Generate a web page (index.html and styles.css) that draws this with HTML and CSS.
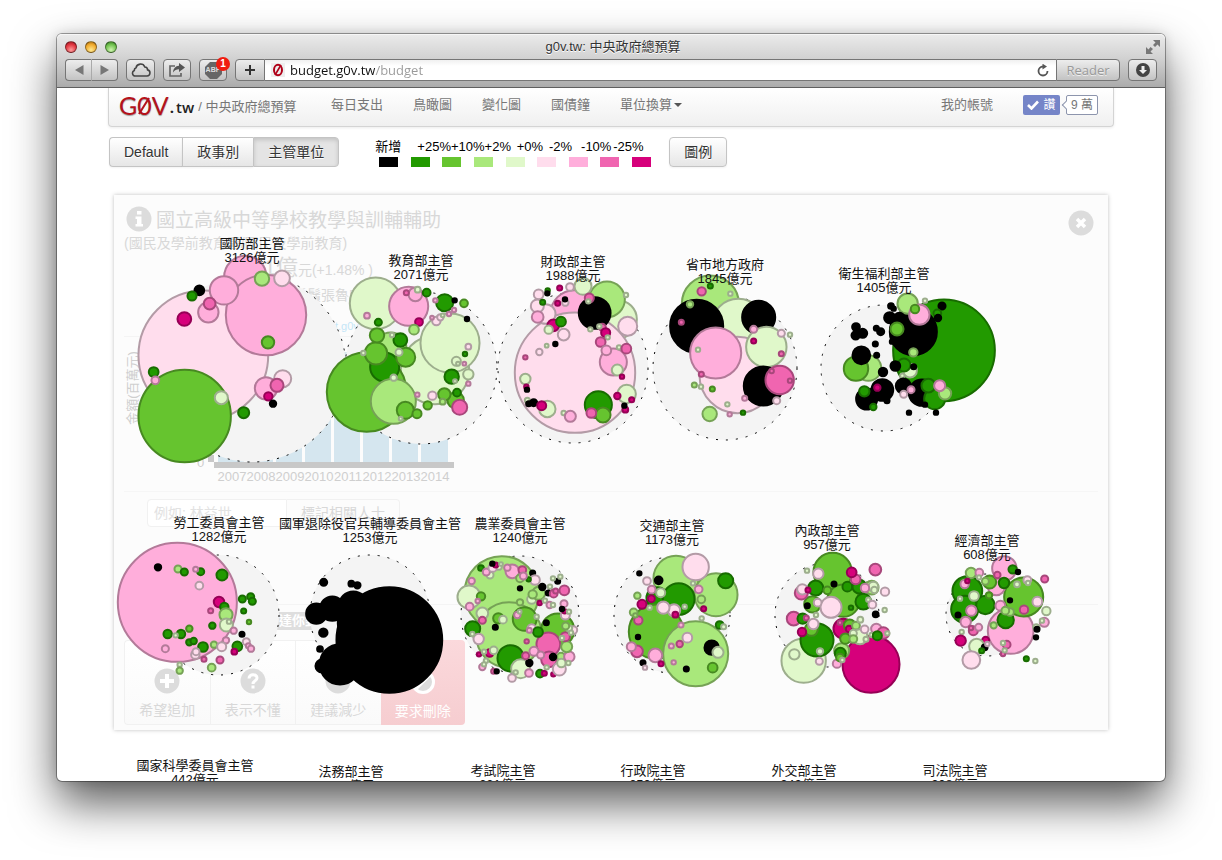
FILE: index.html
```html
<!DOCTYPE html>
<html lang="zh-Hant">
<head>
<meta charset="utf-8">
<title>g0v.tw: 中央政府總預算</title>
<link rel="stylesheet" href="styles.css">
</head>
<body>
<div class="window">
  <header class="chrome">
    <div class="titlebar">
      <div class="lights"><i class="light red"></i><i class="light yellow"></i><i class="light green"></i></div>
      <div class="window-title">g0v.tw: 中央政府總預算</div>
      <svg class="fullscreen" width="16" height="16" viewBox="0 0 16 16" fill="#777"><path d="M8 1h7v7l-2.500-2.500-2.500 2.500-2-2 2.500-2.500z"/><path d="M1 8l2.500 2.500 2-2.500 2.500 2-2.500 2.500 2.500 2.500H1z"/></svg>
    </div>
    <div class="toolbar">
      <div class="nav-pair">
        <button class="tool" aria-label="Back"><svg width="10" height="10" viewBox="0 0 10 10"><path d="M9.500 0v10L1 5z" fill="#777"/></svg></button>
        <button class="tool" aria-label="Forward"><svg width="10" height="10" viewBox="0 0 10 10"><path d="M.5 0v10L9 5z" fill="#777"/></svg></button>
      </div>
      <button class="tool solo" aria-label="iCloud tabs"><svg width="20" height="14" viewBox="0 0 20 14" fill="none" stroke="#444" stroke-width="1.600"><path d="M4.500 13h11.500a3.100 3.100 0 0 0 .6-6.100A3 3 0 0 0 13.800 4 4.600 4.600 0 0 0 5 4.800a2.700 2.700 0 0 0-1.700 2.800A2.800 2.800 0 0 0 4.500 13z"/></svg></button>
      <button class="tool solo narrow" aria-label="Share"><svg width="18" height="14" viewBox="0 0 18 14"><path d="M7 3H2v10h11v-3" fill="none" stroke="#666" stroke-width="1.700"/><path d="M11 0l6 4.500-6 4.500V6.300C8.500 6.300 6.500 7 5 9.500 5.300 5.500 7.500 3 11 2.800z" fill="#555"/></svg></button>
      <button class="tool solo narrow abp" aria-label="Adblock Plus"><svg width="17" height="17" viewBox="0 0 17 17"><path d="M5 0h7l5 5v7l-5 5H5l-5-5V5z" fill="#666"/></svg><span class="abp-text">ABP</span><span class="abp-count">1</span></button>
      <div class="address">
        <button class="tool add" aria-label="Add bookmark"><svg width="12" height="12" viewBox="0 0 12 12"><path d="M6 1v10M1 6h10" stroke="#333" stroke-width="2"/></svg></button>
        <label class="url"><svg width="14" height="14" viewBox="0 0 14 14"><rect width="14" height="14" fill="#eee"/><ellipse cx="7" cy="7" rx="4" ry="5.200" fill="none" stroke="#b00018" stroke-width="2"/><path d="M4 12L10 2" stroke="#b00018" stroke-width="1.600"/></svg>
          <input type="text" value="budget.g0v.tw/budget" aria-label="Address" class="url-input">
          <svg width="12" height="13" viewBox="0 0 12 13"><path d="M10.500 7a4.500 4.500 0 1 1-4.500-4.500" fill="none" stroke="#555" stroke-width="1.800"/><path d="M5.500-.3l4.500 2.800-4.500 3z" fill="#555"/></svg>
        </label>
        <button class="tool reader">Reader</button>
      </div>
      <button class="tool solo" aria-label="Downloads"><svg width="14" height="14" viewBox="0 0 14 14"><circle cx="7" cy="7" r="7" fill="#444"/><path d="M5.500 3h3v4H11l-4 4-4-4h2.500z" fill="#eee"/></svg></button>
    </div>
  </header>

  <main class="page">
    <nav class="navbar">
      <a class="brand" href="#"><span class="logo">G<span class="zero">0<svg width="14" height="20" viewBox="0 0 14 20"><path d="M2 18L12 2" stroke="#b5121b" stroke-width="2"/></svg></span>V</span><span class="logo-tw">.<b>tw</b></span><span class="site">/ 中央政府總預算</span></a>
      <div class="links">
        <a href="#">每日支出</a><a href="#">鳥瞰圖</a><a href="#">變化圖</a><a href="#">國債鐘</a><a href="#">單位換算<i class="caret"></i></a>
      </div>
      <a class="account" href="#">我的帳號</a>
      <button class="like"><svg width="12" height="10" viewBox="0 0 12 10"><path d="M1 5l3.500 3.500L11 1.500" fill="none" stroke="#fff" stroke-width="2.600"/></svg>讚</button>
      <span class="like-count">9 萬</span>
    </nav>

    <section class="controls">
      <div class="btn-group"><button>Default</button><button>政事別</button><button class="active">主管單位</button></div>
      <div class="legend">
        <div class="legend-labels"><span>新增</span><span>+25%</span><span>+10%</span><span>+2%</span><span>+0%</span><span>-2%</span><span>-10%</span><span>-25%</span></div>
        <div class="swatches"><i class="c-k"></i><i class="c-g"></i><i class="c-G"></i><i class="c-l"></i><i class="c-w"></i><i class="c-p"></i><i class="c-P"></i><i class="c-m"></i><i class="c-M"></i></div>
      </div>
      <div class="btn-group"><button>圖例</button></div>
    </section>

    <section class="panel">
      <div class="panel-head">
        <svg width="26" height="26" viewBox="0 0 26 26"><circle cx="13" cy="13" r="12.500" fill="#dcdcdc"/><path d="M11 5h4.500v3.500H11zM9.500 10.500h6V18H17v2.500H9.500V18H11v-5H9.500z" fill="#fff"/></svg>
        <h1>國立高級中等學校教學與訓輔輔助</h1>
        <button class="close" aria-label="Close"><svg width="26" height="26" viewBox="0 0 26 26"><circle cx="13" cy="13" r="12.500" fill="#dcdcdc"/><path d="M9 9l8 8M17 9l-8 8" stroke="#fff" stroke-width="3.500"/></svg></button>
      </div>
      <p class="subtitle">(國民及學前教育署/國民及學前教育)</p>
      <p class="amount"><big>1億</big>元(+1.48% )</p>
      <p class="compare">碗鬍鬚張魯肉飯</p>
      <p class="source"><a href="#">budget.g0v.tw</a></p>
      <svg class="chart" width="340" height="155">
        <g class="bars"><rect x="94" y="15" width="26" height="110"/><rect x="123" y="15" width="26" height="110"/><rect x="152" y="15" width="26" height="110"/><rect x="181" y="15" width="26" height="110"/><rect x="210" y="15" width="26" height="110"/><rect x="239" y="15" width="26" height="110"/><rect x="268" y="15" width="26" height="110"/><rect x="297" y="15" width="27" height="110"/></g>
        <path d="M84 118h6v7h240v6H90v-6h-6z" fill="#c8c8c8"/>
        <text transform="translate(13 51) rotate(-90)" text-anchor="middle">金額(百萬元)</text>
        <text x="73" y="130">0</text>
        <g text-anchor="middle"><text x="108" y="144">2007</text><text x="137" y="144">2008</text><text x="166" y="144">2009</text><text x="195" y="144">2010</text><text x="224" y="144">2011</text><text x="253" y="144">2012</text><text x="282" y="144">2013</text><text x="311" y="144">2014</text></g>
      </svg>
      <form class="tag-form"><input type="text" placeholder="例如: 林益世" aria-label="相關人士"><button type="button">標記相關人士</button></form>
      <div class="prompt"><span>表達你對這筆預算的看法</span></div>
      <div class="votes">
        <button><svg width="26" height="26" viewBox="0 0 26 26"><circle cx="13" cy="13" r="12.500" fill="#dcdcdc"/><path d="M13 6v14M6 13h14" stroke="#fff" stroke-width="4"/></svg>希望追加</button>
        <button><svg width="26" height="26" viewBox="0 0 26 26"><circle cx="13" cy="13" r="12.500" fill="#dcdcdc"/><path d="M9 10.500c0-5 8-5 8-.5 0 3-4 2.500-4 6" fill="none" stroke="#fff" stroke-width="3"/><rect x="11.500" y="17.500" width="3" height="3" fill="#fff"/></svg>表示不懂</button>
        <button><svg width="26" height="26" viewBox="0 0 26 26"><circle cx="13" cy="13" r="12.500" fill="#dcdcdc"/><path d="M6 13h14" stroke="#fff" stroke-width="4"/></svg>建議減少</button>
        <button class="danger"><svg width="26" height="26" viewBox="0 0 26 26"><circle cx="13" cy="13" r="10.500" fill="#dcdcdc" stroke="#fff" stroke-width="3"/><path d="M6 20L20 6" stroke="#fff" stroke-width="3"/></svg>要求刪除</button>
      </div>
    </section>

    <svg class="bubbles" id="bubbles"></svg>
  </main>
</div>
<script src="bubbles.js"></script>
</body>
</html>
```

FILE: styles.css
```css
* { box-sizing: border-box; }
body {
  margin: 0;
  min-height: 100vh;
  padding: 34px 57px 79px;
  background: #fff;
  color: #555;
  font: 14px/20px "Liberation Sans", "Noto Sans CJK TC", sans-serif;
  display: flex;
}
button, input { font: inherit; color: inherit; margin: 0; }
button { cursor: pointer; }
p, h1 { margin: 0; font-weight: normal; }
a { color: inherit; text-decoration: none; }

.window {
  flex: 1;
  min-width: 0;
  height: calc(100vh - 113px);
  display: flex;
  flex-direction: column;
  border-radius: 5px;
  background: #fff;
  box-shadow: 0 0 0 1px rgba(0,0,0,.35), 0 0 12px rgba(0,0,0,.15), 0 22px 46px rgba(0,0,0,.65);
}

/* browser chrome */
.chrome {
  border-radius: 5px 5px 0 0;
  border-bottom: 1px solid #5f5f5f;
  background: linear-gradient(#ebebeb, #d2d2d2 45%, #ababab);
  box-shadow: inset 0 1px #f6f6f6;
  padding: 0 8px 6px;
}
.titlebar { display: flex; align-items: center; height: 25px; }
.lights { display: flex; gap: 8px; width: 70px; }
.light { width: 12px; height: 12px; border-radius: 50%; border: 1px solid rgba(0,0,0,.4); }
.red { background: radial-gradient(circle at 50% 80%, #ff9c9c, #e0353f 60%, #8d1420); }
.yellow { background: radial-gradient(circle at 50% 80%, #ffe98f, #f0a92c 60%, #94600f); }
.green { background: radial-gradient(circle at 50% 80%, #cff5b0, #6fc04d 60%, #2d6c1e); }
.window-title { flex: 1; text-align: center; font-size: 13px; color: #333; text-shadow: 0 1px #fff; }
.fullscreen { margin-left: 54px; margin-right: -4px; }
.toolbar { display: flex; gap: 8px; height: 22px; }
.tool {
  display: flex;
  align-items: center;
  justify-content: center;
  padding: 0;
  border: 1px solid #757575;
  border-radius: 4px;
  background: linear-gradient(#ededed, #c3c3c3);
}
.nav-pair { display: flex; }
.nav-pair .tool { width: 27px; }
.nav-pair .tool:first-child { border-radius: 4px 0 0 4px; border-right-color: #aaa; }
.nav-pair .tool:last-child { border-radius: 0 4px 4px 0; border-left: 0; width: 26px; }
.solo { width: 29px; }
.narrow { width: 28px; }
.abp { position: relative; }
.abp-text { position: absolute; font-size: 7px; line-height: 8px; font-weight: bold; color: #ddd; }
.abp-count {
  position: absolute;
  top: -3px;
  right: -4px;
  width: 14px;
  height: 14px;
  border-radius: 50%;
  background: #f01c10;
  color: #fff;
  font-size: 10px;
  line-height: 14px;
  font-weight: bold;
}
.address { flex: 1; display: flex; min-width: 0; }
.add { width: 30px; border-radius: 4px 0 0 4px; }
.url {
  flex: 1;
  min-width: 0;
  display: flex;
  align-items: center;
  gap: 5px;
  padding: 0 7px 0 6px;
  background: linear-gradient(#f0f0f0, #fff 30%);
  border: solid #757575;
  border-width: 1px 0;
}
.url-input {
  flex: 1;
  min-width: 0;
  height: 20px;
  padding: 0;
  border: 0;
  outline: 0;
  font-family: "Open Sans", sans-serif;
  font-size: 13px;
  color: transparent;
  background: linear-gradient(90deg, #111 85px, #999 85px);
  -webkit-background-clip: text;
  background-clip: text;
}
.reader { width: 64px; border-radius: 0 4px 4px 0; color: #999; font-family: "Open Sans", sans-serif; font-size: 13px; text-shadow: 0 1px #eee; }

/* page */
.page { position: relative; flex: 1; min-height: 0; overflow: hidden; padding: 0 51px; border-radius: 0 0 5px 5px; }
.navbar {
  display: flex;
  align-items: center;
  height: 39px;
  padding: 0 15px 4px 10px;
  border: 1px solid #d4d4d4;
  border-top: 0;
  border-radius: 0 0 4px 4px;
  background: linear-gradient(#fff, #f0f0f0);
  box-shadow: 0 1px 3px rgba(0,0,0,.08);
  font-size: 13px;
  color: #777;
}
.brand { display: flex; align-items: center; width: 212px; white-space: nowrap; }
.logo { font-family: Lato, sans-serif; font-size: 25px; color: #b5121b; text-shadow: 0 1px 1px rgba(0,0,0,.35); }
.zero { position: relative; }
.zero svg { position: absolute; left: 0; top: 6px; }
.logo-tw { margin: 0 4px 0 1px; padding-top: 4px; color: #222; font: 15px/20px "Open Sans", sans-serif; font-weight: bold; }
.logo-tw b { font-weight: 600; margin-left: 2px; }
.site { padding-top: 4px; }
.links { display: flex; gap: 30px; flex: 1; }
.caret { display: inline-block; margin-left: 2px; vertical-align: 2px; border: 4px solid transparent; border-top-color: #555; border-bottom: 0; }
.account { margin-right: 30px; }
.like { display: flex; align-items: center; justify-content: center; gap: 4px; width: 37px; height: 20px; padding: 0; border: 0; border-radius: 2px; background: #7585c8; color: #fff; font-size: 12px; }
.like-count { position: relative; margin-left: 6px; width: 32px; height: 20px; border: 1px solid #8d95ad; border-radius: 2px; background: #fff; font-size: 12px; line-height: 18px; text-align: center; }
.like-count::before { content: ""; position: absolute; left: -4px; top: 6px; width: 5px; height: 5px; background: #fff; border: solid #8d95ad; border-width: 0 0 1px 1px; transform: rotate(45deg); }

.controls { display: flex; height: 30px; margin: 10px 1px 28px; }
.btn-group { display: flex; }
.btn-group button {
  height: 30px;
  padding: 0 14px;
  border: 1px solid #c4c4c4;
  border-right-width: 0;
  background: linear-gradient(#fff, #e6e6e6);
  color: #333;
  text-shadow: 0 1px #fff;
  box-shadow: 0 1px 2px rgba(0,0,0,.05);
}
.btn-group button:first-child { border-radius: 4px 0 0 4px; }
.btn-group button:last-child { border-right-width: 1px; border-radius: 0 4px 4px 0; }
.btn-group button:only-child { border-radius: 4px; }
.btn-group .active { background: #e4e4e4; box-shadow: inset 0 2px 4px rgba(0,0,0,.15); }
.legend { width: 284px; margin: 0 6px 0 40px; color: #000; font-size: 13px; }
.legend-labels { display: grid; grid-template-columns: 42px repeat(7, 1fr); width: 270px; margin-left: -4px; white-space: nowrap; }
.swatches { display: grid; grid-template-columns: repeat(9, 1fr); }
.swatches i { width: 19px; height: 10px; }
.c-k { background: #000; } .c-g { background: #229a00; } .c-G { background: #66c42f; }
.c-l { background: #a9e87b; } .c-w { background: #e0f8ca; } .c-p { background: #ffdded; }
.c-P { background: #ffaedb; } .c-m { background: #f065b0; } .c-M { background: #d6007b; }

/* faded detail panel behind the bubbles */
.panel { margin: 0 6px; padding: 10px 10px 5px; background: #fcfcfc; box-shadow: 0 0 4px rgba(0,0,0,.25); color: #d8d8d8; }
.panel-head { display: flex; align-items: flex-start; gap: 4px; height: 28px; padding: 1px 0 0 2px; }
.panel-head h1 { flex: 1; font-size: 19px; line-height: 30px; }
.close { width: 26px; height: 26px; margin: 4px 4px 0 0; padding: 0; border: 0; background: none; }
.close svg { display: block; }
.subtitle { line-height: 20px; }
.amount { width: 249px; text-align: right; line-height: 30px; }
.amount big { font-size: 22px; }
.compare { width: 253px; text-align: right; }
.source { width: 248px; margin: 11px 0 0; text-align: right; font-size: 11px; color: #c4e6f7; }
.chart { display: block; border-top: 1px solid #f4f4f4; fill: #cfcfcf; font-size: 13px; }
.bars { fill: #d5e6ef; }
.tag-form { display: flex; height: 43px; padding: 7px 0 7px 23px; border-top: 1px solid #f6f6f6; }
.tag-form input { width: 140px; height: 28px; padding: 0 6px; border: 1px solid #f1f1f1; border-radius: 4px 0 0 4px; background: #fff; }
.tag-form input::placeholder { color: #e2e2e2; }
.tag-form button { height: 28px; padding: 0 14px; border: 1px solid #f1f1f1; border-left: 0; border-radius: 0 4px 4px 0; background: #fcfcfc; }
.prompt { margin-top: 70px; padding: 7px 0 10px 130px; border-top: 1px solid #f4f4f4; font-size: 13px; line-height: 18px; font-weight: bold; }
.prompt span { display: inline-block; padding: 0 12px; background: #dedede; color: #fff; }
.votes { display: flex; width: 341px; }
.votes button { flex: 1 1 0; height: 85px; display: flex; flex-direction: column; align-items: center; justify-content: flex-end; gap: 6px; padding: 0 0 4px; border: 1px solid #f1f1f1; border-right: 0; background: linear-gradient(#fff, #fafafa); }
.votes button:first-child { border-radius: 4px 0 0 4px; }
.votes .danger { border: 0; border-radius: 0 4px 4px 0; background: linear-gradient(#fbd9dc, #f6cdd0); color: #fff; }

.bubbles { position: absolute; left: 0; top: 0; width: 100%; height: 100%; pointer-events: none; }
.orbit { fill: #f4f4f4; stroke: #000; stroke-dasharray: 2 8; }
.label { fill: #111; font-size: 13px; text-anchor: middle; }
```

FILE: bubbles.js
```js
// Colour classes by yearly change: k new, g/G/l/w growing, p/P/m/M shrinking.
const COLORS = {
  k: ['#000', '#000'], g: ['#229a00', '#186c00'], G: ['#66c42f', '#478921'],
  l: ['#a9e87b', '#76a256'], w: ['#e0f8ca', '#9dae8d'], p: ['#ffdded', '#b39ba6'],
  P: ['#ffaedb', '#b37a99'], m: ['#f065b0', '#a8477b'], M: ['#d6007b', '#960056']
};

// Each ministry: name, budget, label x, label baseline, orbit centre y, orbit radius,
// origin of its bubbles, then "colour x y radius" items in thirds of a pixel.
const MINISTRIES = [
  ['國防部主管', '3126億元', 252, 248, 368, 94, 110, 190,
   'p 280 496 197,P 406 261 66,P 468 375 123,G 224 678 141,P 342 301 45,P 295 367 33,m 299 341 20,M 223 387 23,k 268 301 17,g 246 318 16,l 456 266 24,p 516 265 26,G 474 457 21,g 131 546 17,P 136 571 14,w 334 623 22,g 401 668 19,p 518 566 28,P 468 595 36,m 501 586 22,M 475 619 15,k 489 641 12'],
  ['教育部主管', '2071億元', 421, 265, 368, 76, 320, 240,
   'w 345 390 105,w 167 190 80,w 390 309 91,l 212 325 50,P 266 199 61,P 286 163 23,G 140 456 122,g 194 381 46,l 220 484 70,G 168 340 36,G 171 286 24,g 241 300 23,G 257 352 31,G 256 511 28,G 291 521 16,G 323 496 15,G 407 481 27,G 373 463 21,g 411 458 14,m 419 502 25,g 395 410 24,g 374 188 28,k 404 181 9,G 432 190 14,k 441 237 9,P 346 181 9,g 320 158 14,w 293 149 11,m 259 158 10,M 297 246 14,l 282 269 17,p 349 243 15,P 336 233 8,p 361 232 12,w 368 226 8,P 387 222 9,P 402 210 9,p 445 320 11,g 435 342 9,w 409 364 16,w 414 371 8,P 433 371 8,w 445 403 18,P 445 431 9,w 405 423 8,w 221 413 12,w 237 337 13,w 216 285 9,w 130 339 9,P 292 464 9,p 337 467 15,l 368 485 11,w 242 536 8,P 141 227 11,g 175 247 13'],
  ['財政部主管', '1988億元', 573, 266, 368, 75, 495, 240,
   'w 368 238 60,P 238 222 74,l 336 178 56,p 240 398 183,p 152 222 32,k 299 219 50,w 264 139 28,p 131 163 17,p 127 198 22,P 128 231 20,g 158 151 9,k 157 160 9,M 194 144 10,p 225 141 14,M 188 190 10,p 211 188 12,k 210 178 9,g 143 187 10,M 175 256 20,g 198 245 17,w 161 269 15,p 206 284 20,m 283 174 16,w 280 184 9,w 393 165 9,p 398 259 31,w 286 268 9,m 322 262 13,w 313 259 9,M 332 278 16,w 338 292 9,m 317 306 17,P 355 366 43,P 334 331 17,w 372 322 9,m 394 326 17,w 367 390 19,M 381 410 9,w 155 317 8,k 181 312 9,p 133 336 12,m 91 352 9,w 91 417 18,M 94 440 9,k 96 449 9,w 97 481 10,k 101 491 10,k 116 488 13,w 157 507 27,M 140 497 16,w 206 519 9,P 226 529 19,g 310 494 43,G 324 525 25,m 289 519 17,w 395 462 30,M 367 468 12,M 410 479 10,M 391 509 11,k 388 497 9'],
  ['省市地方政府', '1845億元', 725, 269, 368, 72, 645, 240,
   'l 196 192 88,w 280 257 83,p 278 405 117,k 155 259 82,P 212 339 79,k 341 232 52,w 364 321 63,k 355 438 61,m 404 420 45,m 170 154 15,g 196 138 10,w 256 161 9,l 135 193 12,m 109 247 10,P 326 268 13,M 326 303 10,p 409 280 13,w 435 284 9,m 409 341 10,w 159 329 9,m 169 403 10,l 148 435 10,w 168 440 9,G 202 447 10,w 247 493 9,l 194 522 24,P 254 523 9,g 294 518 9,P 299 475 10,p 395 482 13,m 380 393 9,m 435 422 9'],
  ['衛生福利部主管', '1405億元', 884, 278, 368, 63, 810, 250,
   'g 402 301 155,k 310 245 73,l 175 354 41,G 138 356 39,k 154 316 29,l 293 161 33,P 328 194 33,G 315 177 15,w 345 152 9,k 396 168 13,g 382 190 14,k 384 204 12,k 243 168 11,k 251 176 9,k 239 203 19,k 268 205 19,k 249 257 9,k 246 275 9,G 261 237 22,k 138 231 14,k 137 256 15,k 158 250 16,k 199 235 10,k 212 245 13,k 196 282 10,k 200 316 10,l 310 307 15,w 300 362 23,g 282 345 22,k 256 348 17,k 311 350 10,w 277 377 9,k 219 366 15,k 217 420 35,k 170 447 34,k 231 452 10,g 163 424 18,M 202 413 12,g 190 471 12,k 280 408 25,k 336 428 42,g 374 446 34,g 355 407 23,l 405 430 21,P 389 407 19,p 281 433 13,P 303 419 13,k 345 464 9,k 297 488 9,k 378 488 9'],
  ['勞工委員會主管', '1282億元', 219, 527, 615, 60, 110, 490,
   'P 202 337 181,k 144 232 12,l 204 237 13,g 223 246 13,g 272 245 13,P 257 238 10,g 336 255 19,p 268 287 14,M 327 336 18,g 343 351 15,m 302 362 10,l 348 374 22,w 349 405 22,w 357 395 9,g 307 407 12,P 371 422 12,k 396 433 10,g 397 327 13,g 422 320 13,g 427 334 13,g 401 363 10,G 417 396 9,g 173 432 15,g 213 432 15,w 197 436 9,G 238 416 12,g 238 457 12,g 251 453 12,g 279 471 17,P 166 476 13,p 256 494 15,p 258 485 13,l 312 464 12,P 348 451 12,p 335 470 16,g 382 469 17,M 373 485 11,p 409 455 13,P 415 467 10,P 423 476 12,m 330 510 13,m 282 508 10,l 305 533 14,w 209 524 9,l 209 542 12'],
  ['國軍退除役官兵輔導委員會主管', '1253億元', 370, 528, 615, 60, 110, 490,
   'k 838 450 161,k 690 523 63,k 636 528 22,k 730 348 46,k 667 356 39,k 619 371 33,k 718 400 37,k 641 277 13,k 724 281 11,k 742 286 12,k 640 428 15,k 630 477 11'],
  ['農業委員會主管', '1240億元', 520, 528, 615, 59, 450, 500,
   'l 155 280 114,l 177 405 101,G 323 390 52,G 224 357 38,w 57 291 37,g 182 475 42,w 212 506 31,m 295 433 38,m 297 478 26,g 68 386 25,w 97 340 20,m 97 361 13,G 145 355 18,w 159 359 14,k 136 382 10,p 86 417 18,w 67 402 9,M 87 463 9,M 119 459 14,w 102 455 9,w 131 451 14,w 108 482 9,P 97 501 12,w 102 493 9,m 131 514 10,k 140 514 9,p 186 534 14,w 197 517 9,P 237 519 14,k 238 489 12,m 227 467 13,P 252 454 16,P 272 465 13,g 270 521 14,M 283 520 10,w 290 502 9,l 333 470 14,k 309 471 12,M 310 523 9,p 328 507 22,w 334 489 15,P 358 470 18,l 350 440 19,w 355 489 9,m 346 410 16,w 336 414 9,p 370 390 14,w 357 385 12,w 363 398 9,l 347 378 13,k 289 368 10,p 245 385 15,g 264 396 17,P 238 391 10,m 230 424 9,w 260 350 9,P 202 345 12,w 209 335 8,l 210 307 12,w 245 298 16,l 266 280 22,l 248 283 15,M 269 309 9,w 285 302 9,P 299 315 12,w 309 315 9,P 342 311 13,p 346 345 16,M 344 334 9,k 336 327 9,w 357 335 9,k 277 261 12,w 300 260 9,k 295 279 10,m 311 281 14,m 317 273 10,m 343 271 17,k 323 244 10,w 309 235 9,w 331 230 9,k 248 219 10,p 255 240 17,g 236 238 9,P 187 214 23,m 217 210 14,l 210 235 14,P 220 228 13,P 172 203 12,k 210 265 9,P 65 243 12,G 93 289 15,P 83 303 9,P 59 320 14,g 93 204 11,w 120 225 13,P 109 216 13,w 146 200 12,p 128 203 15,M 137 195 10,w 153 192 8,k 127 191 9'],
  ['交通部主管', '1173億元', 672, 530, 615, 58, 450, 500,
   'l 678 235 70,l 798 284 67,g 622 294 35,g 686 297 50,G 618 395 84,l 737 461 100,p 737 201 42,g 827 242 25,k 568 220 9,p 591 243 14,k 626 241 14,P 605 269 14,w 632 278 16,M 604 296 13,M 576 313 16,l 562 287 12,w 599 323 9,p 672 331 21,p 640 323 21,M 676 344 11,w 704 320 9,w 729 250 9,P 746 268 14,l 754 298 14,M 761 326 10,w 755 355 9,g 809 375 14,w 821 380 10,m 565 361 15,l 551 337 14,l 556 346 9,k 564 411 9,m 561 454 20,P 544 440 16,P 616 466 23,k 579 488 10,p 585 503 9,M 633 491 10,P 664 438 10,m 689 432 12,P 671 487 9,p 712 413 17,P 693 375 10,k 785 443 24,w 804 457 19,G 788 503 17,k 709 507 10'],
  ['內政部主管', '957億元', 827, 535, 615, 52, 760, 510,
   'G 218 186 60,G 250 272 51,w 131 452 69,M 250 356 32,M 333 463 88,g 171 390 52,g 167 234 25,G 157 283 27,p 213 292 34,m 124 249 22,p 127 238 18,M 144 240 10,p 175 191 18,w 141 182 9,k 222 222 10,G 202 241 14,g 262 230 17,g 298 230 23,m 287 208 17,M 275 187 17,m 346 179 20,l 335 233 23,w 340 230 17,w 343 240 12,P 315 234 15,p 375 245 15,g 310 275 26,w 325 269 9,p 337 284 14,k 347 313 11,w 374 300 9,g 273 293 9,k 142 287 10,p 173 278 14,m 101 326 23,g 128 326 18,m 139 324 10,G 154 358 22,p 160 342 18,w 168 315 9,M 126 366 15,w 103 433 18,w 180 424 12,p 178 454 13,P 231 461 15,l 245 422 25,g 241 430 19,G 240 443 14,w 247 450 9,G 269 346 20,M 267 357 12,l 288 347 14,w 301 329 11,w 300 380 25,G 256 386 18,w 280 370 13,l 280 387 14,p 314 358 14,w 318 388 10,P 349 357 18,w 335 375 9,m 370 369 20,g 352 377 16,w 382 370 9,m 240 338 9'],
  ['經濟部主管', '608億元', 987, 545, 615, 41, 760, 510,
   'P 733 175 39,P 752 363 71,G 791 261 61,P 709 230 28,g 622 243 47,g 614 298 43,g 676 285 30,G 689 216 22,l 676 214 13,l 633 189 18,P 658 188 14,w 657 202 9,P 614 222 15,M 622 213 9,m 712 195 12,g 732 219 18,g 758 178 15,k 774 186 9,w 642 258 17,w 600 266 9,G 687 256 12,P 634 302 18,P 617 336 18,k 594 315 10,P 721 287 17,g 737 330 27,l 750 306 14,l 736 302 14,m 792 299 15,k 750 271 9,w 771 223 11,p 802 210 14,w 804 219 9,p 832 275 17,w 859 303 15,P 853 337 16,w 846 332 9,m 854 207 13,w 829 352 12,k 831 358 10,k 828 382 9,l 701 346 12,m 640 362 16,P 656 352 13,m 633 354 9,w 605 366 9,M 602 392 18,M 677 391 13,w 650 409 25,k 674 412 11,p 682 402 9,g 665 422 10,p 634 450 29,m 740 404 14,w 729 399 9,m 729 432 9,w 734 421 9,g 799 446 10,w 826 453 9'],
  ['國家科學委員會主管', '442億元', 195, 770, 862, 35, 0, 0, ''],
  ['法務部主管', '444億元', 351, 776, 862, 30, 0, 0, ''],
  ['考試院主管', '331億元', 503, 775, 862, 30, 0, 0, ''],
  ['行政院主管', '250億元', 653, 775, 862, 30, 0, 0, ''],
  ['外交部主管', '242億元', 804, 775, 862, 30, 0, 0, ''],
  ['司法院主管', '208億元', 955, 775, 862, 30, 0, 0, '']
];

const orbits = [];
const dots = [];
const labels = [];
for (const [name, sum, x, y, cy, r, ox, oy, items] of MINISTRIES) {
  orbits.push(`<circle class="orbit" cx="${x}" cy="${cy}" r="${r}"/>`);
  for (const item of items ? items.split(',') : []) {
    const [c, bx, by, br] = item.split(' ');
    const [fill, stroke] = COLORS[c];
    dots.push(`<circle cx="${ox + bx / 3}" cy="${oy + by / 3}" r="${br / 3 - 0.8}" fill="${fill}" stroke="${stroke}" stroke-width="2"/>`);
  }
  labels.push(`<text class="label" x="${x}" y="${y}">${name}</text><text class="label" x="${x}" y="${y + 14}">${sum}</text>`);
}
document.getElementById('bubbles').innerHTML =
  `<g transform="translate(-57 -88)">${orbits.join('')}${dots.join('')}${labels.join('')}</g>`;
```
